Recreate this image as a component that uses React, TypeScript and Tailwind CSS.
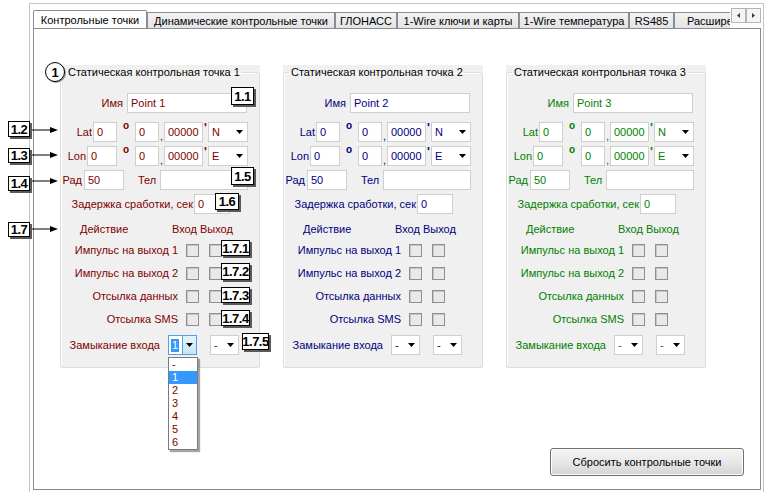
import type { ReactNode } from "react";

type Tone = "red" | "blue" | "green";

const toneText: Record<Tone, string> = {
  red: "text-[#800000]",
  blue: "text-[#000080]",
  green: "text-[#008000]",
};

const tabs = [
  { label: "Контрольные точки", w: "w-[114px]", active: true },
  { label: "Динамические контрольные точки", w: "w-[188px]" },
  { label: "ГЛОНАСС", w: "w-[62px]" },
  { label: "1-Wire ключи и карты", w: "w-[122px]" },
  { label: "1-Wire температура", w: "w-[110px]" },
  { label: "RS485", w: "w-[45px]" },
  { label: "Расширения", w: "w-[90px]" },
];

function DownArrow() {
  return (
    <svg width="7" height="4" viewBox="0 0 7 4" className="shrink-0">
      <path d="M0 0h7L3.5 4z" fill="#000" />
    </svg>
  );
}

function Field({ value = "", w }: { value?: string; w: string }) {
  return (
    <div
      className={`h-[20px] ${w} shrink-0 border border-[#cfcfcf] bg-white pl-[3px] flex items-center leading-none overflow-hidden`}
    >
      {value}
    </div>
  );
}

function Combo({ value, w, focused }: { value: string; w: string; focused?: boolean }) {
  if (focused) {
    return (
      <div
        className={`h-[20px] ${w} shrink-0 border border-[#569de5] bg-white flex items-stretch`}
      >
        <div className="flex-1 flex items-center pl-[2px]">
          <span className="bg-[#3399ff] text-white leading-[13px] px-[1px]">{value}</span>
        </div>
        <div className="w-[14px] border-l border-[#569de5] bg-linear-to-b from-[#e5f4fc] to-[#c4e5f6] flex items-center justify-center">
          <DownArrow />
        </div>
      </div>
    );
  }
  return (
    <div
      className={`h-[20px] ${w} shrink-0 border border-[#cfcfcf] bg-white pl-[3px] pr-[4px] flex items-center leading-none`}
    >
      <span className="flex-1">{value}</span>
      <DownArrow />
    </div>
  );
}

function Check() {
  return (
    <div className="w-[13px] h-[13px] shrink-0 border border-[#8f8f8f] bg-[#e9e9e9] shadow-[inset_1px_1px_0_#c6c6c6]" />
  );
}

function CoordRow({ label, labelW, firstW, gap, dir }: { label: string; labelW: string; firstW: string; gap: string; dir: string }) {
  return (
    <div className="h-[20px] flex items-start mt-[4px] first:mt-0">
      <span className={`${labelW} shrink-0 text-right self-center leading-[14px] whitespace-nowrap`}>{label}</span>
      <div className={gap}>
        <Field value="0" w={firstW} />
      </div>
      <span className="w-[18px] shrink-0 pl-[6px] font-bold text-[10px] leading-[10px] -mt-[1px]">o</span>
      <Field value="0" w="w-[24px]" />
      <span className="w-[5px] shrink-0 self-end leading-[12px] pl-[1px]">,</span>
      <Field value="00000" w="w-[39px]" />
      <span className="w-[5px] shrink-0 font-bold text-[12px] leading-[12px] pl-[1px]">'</span>
      <Combo value={dir} w="w-[40px]" />
    </div>
  );
}

function PointGroup({ n, tone }: { n: number; tone: Tone }) {
  const t = toneText[tone];
  const actions = ["Импульс на выход 1", "Импульс на выход 2", "Отсылка данных", "Отсылка SMS"];
  return (
    <div className="w-[200px] h-[303px] bg-[#f0f0f0] shrink-0">
      <fieldset className="h-full border border-[#d5dfe5] rounded-[3px] shadow-[inset_1px_1px_0_#fff]">
        <legend className="ml-[5px] px-[2px] text-black leading-[14px] whitespace-nowrap">
          Статическая контрольная точка {n}
        </legend>
        <div className={`flex flex-col ${t}`}>
          <div className="h-[20px] mt-[14px] flex items-center">
            <span className="w-[62px] text-right">Имя</span>
            <div className="ml-[4px]">
              <Field value={`Point ${n}`} w="w-[120px]" />
            </div>
          </div>
          <div className="mt-[9px] flex flex-col">
            <CoordRow label="Lat" labelW="w-[31px]" firstW="w-[24px]" gap="ml-[1px]" dir="N" />
            <CoordRow label="Lon" labelW="w-[25px]" firstW="w-[30px]" gap="ml-[1px]" dir="E" />
          </div>
          <div className="h-[20px] mt-[4px] flex items-center">
            <span className="w-[21px] text-right">Рад</span>
            <div className="ml-[2px]">
              <Field value="50" w="w-[40px]" />
            </div>
            <span className="ml-[14px] w-[20px]">Тел</span>
            <div className="ml-[2px]">
              <Field w="w-[88px]" />
            </div>
          </div>
          <div className="h-[20px] mt-[4px] flex items-center">
            <span className="w-[132px] text-right whitespace-nowrap">Задержка сработки, сек</span>
            <div className="ml-[1px]">
              <Field value="0" w="w-[36px]" />
            </div>
          </div>
          <div className="h-[14px] mt-[8px] flex items-center leading-[14px]">
            <span className="ml-[19px] w-[92px]">Действие</span>
            <span className="whitespace-nowrap">Вход Выход</span>
          </div>
          <div className="mt-[3px] flex flex-col">
            {actions.map((a) => (
              <div key={a} className="h-[23px] flex items-center">
                <span className="w-[117px] text-right whitespace-nowrap">{a}</span>
                <div className="ml-[8px]">
                  <Check />
                </div>
                <div className="ml-[10px]">
                  <Check />
                </div>
              </div>
            ))}
          </div>
          <div className="h-[20px] mt-[4px] flex items-center">
            <span className="w-[99px] text-right whitespace-nowrap">Замыкание входа</span>
            <div className="ml-[8px]">
              <Combo value={n === 1 ? "1" : "-"} w="w-[29px]" focused={n === 1} />
            </div>
            <div className="ml-[13px]">
              <Combo value="-" w="w-[29px]" />
            </div>
          </div>
        </div>
      </fieldset>
    </div>
  );
}

function Callout({ pos, children }: { pos: string; children: ReactNode }) {
  return (
    <div
      className={`absolute ${pos} z-20 bg-white border border-black shadow-[2px_2px_0_#5a5a5a] text-black font-bold text-[13px] tracking-[-0.5px] leading-none flex items-center justify-center`}
    >
      {children}
    </div>
  );
}

function Pointer({ pos }: { pos: string }) {
  return (
    <svg className={`absolute ${pos} z-20`} width="26" height="8" viewBox="0 0 26 8">
      <line x1="0" y1="4" x2="19" y2="4" stroke="#000" strokeWidth="1" />
      <path d="M18 1L26 4L18 7z" fill="#000" />
    </svg>
  );
}

export default function App() {
  const list = ["-", "1", "2", "3", "4", "5", "6"];
  return (
    <div className="relative w-[766px] h-[492px] overflow-hidden bg-white text-[11px] text-black font-['Liberation_Sans',Arial,sans-serif] pl-[29px] pt-[3px]">
      <div className="w-[735px] h-[489px] border-l border-t border-r border-[#c4c4c4] pl-[3px] pt-[6px]">
        <div className="w-[728px]">
          {/* tab strip */}
          <div className="relative h-[18px] flex items-end">
            <div className="flex items-end w-[697px] h-full overflow-hidden">
              {tabs.map((tab) =>
                tab.active ? (
                  <div
                    key={tab.label}
                    className={`${tab.w} shrink-0 h-[19px] -mb-[1px] relative z-10 bg-white border border-b-0 border-[#898c95] rounded-t-[2px] flex items-center justify-center whitespace-nowrap`}
                  >
                    {tab.label}
                  </div>
                ) : (
                  <div
                    key={tab.label}
                    className={`${tab.w} shrink-0 h-[16px] border border-b-0 border-[#898c95] bg-linear-to-b from-[#f3f3f3] to-[#e4e4e4] flex items-center justify-center whitespace-nowrap overflow-hidden pt-[1px]`}
                  >
                    {tab.label}
                  </div>
                )
              )}
            </div>
            <div className="absolute right-[0px] -top-[2px] flex">
              <div className="w-[15px] h-[15px] border border-[#b5b5b5] bg-[#f4f4f4] flex items-center justify-center">
                <svg width="3" height="5" viewBox="0 0 3 5">
                  <path d="M3 0v5L0 2.5z" fill="#2a3b6b" />
                </svg>
              </div>
              <div className="w-[15px] h-[15px] border border-[#b5b5b5] bg-[#f4f4f4] flex items-center justify-center">
                <svg width="3" height="5" viewBox="0 0 3 5">
                  <path d="M0 0v5L3 2.5z" fill="#2a3b6b" />
                </svg>
              </div>
            </div>
          </div>
          {/* panel */}
          <div className="h-[462px] border border-[#898c95] bg-white flex flex-col">
            <div className="pt-[36px] pl-[26px] flex gap-[23px]">
              <PointGroup n={1} tone="red" />
              <PointGroup n={2} tone="blue" />
              <PointGroup n={3} tone="green" />
            </div>
            <div className="mt-auto self-end mr-[16px] mb-[13px] w-[194px] h-[28px] rounded-[3px] border border-[#707070] bg-linear-to-b from-[#f4f4f4] via-[#e8e8e8] to-[#d4d4d4] shadow-[inset_0_0_0_1px_#fcfcfc] flex items-center justify-center">
              Сбросить контрольные точки
            </div>
          </div>
        </div>
      </div>

      {/* annotations */}
      <div className="absolute left-[45px] top-[62px] z-20 w-[20px] h-[20px] rounded-full border-[1.5px] border-black bg-white shadow-[1px_1px_0_#9a9a9a] font-bold text-[13px] flex items-center justify-center leading-none">
        1
      </div>
      <Callout pos="left-[231px] top-[87px] w-[23px] h-[18px]">1.1</Callout>
      <Callout pos="left-[8px] top-[121px] w-[22px] h-[16px]">1.2</Callout>
      <Callout pos="left-[8px] top-[148px] w-[22px] h-[15px]">1.3</Callout>
      <Callout pos="left-[8px] top-[176px] w-[22px] h-[15px]">1.4</Callout>
      <Callout pos="left-[231px] top-[167px] w-[23px] h-[18px]">1.5</Callout>
      <Callout pos="left-[215px] top-[193px] w-[24px] h-[17px]">1.6</Callout>
      <Callout pos="left-[8px] top-[222px] w-[22px] h-[15px]">1.7</Callout>
      <Callout pos="left-[221px] top-[240px] w-[29px] h-[16px]">1.7.1</Callout>
      <Callout pos="left-[221px] top-[263px] w-[29px] h-[17px]">1.7.2</Callout>
      <Callout pos="left-[221px] top-[287px] w-[29px] h-[16px]">1.7.3</Callout>
      <Callout pos="left-[221px] top-[310px] w-[29px] h-[16px]">1.7.4</Callout>
      <Callout pos="left-[242px] top-[333px] w-[27px] h-[17px]">1.7.5</Callout>
      <Pointer pos="left-[32px] top-[126px]" />
      <Pointer pos="left-[32px] top-[151px]" />
      <Pointer pos="left-[32px] top-[177px]" />
      <Pointer pos="left-[32px] top-[225px]" />

      {/* open dropdown of "Замыкание входа" */}
      <div className="absolute left-[168px] top-[357px] z-30 w-[30px] border border-[#7a7a7a] bg-white shadow-[2px_2px_1px_rgba(0,0,0,0.35)] text-[#800000]">
        {list.map((item) => (
          <div
            key={item}
            className={`h-[13px] leading-[13px] pl-[3px] ${item === "1" ? "bg-[#3399ff] text-white" : ""}`}
          >
            {item}
          </div>
        ))}
      </div>
    </div>
  );
}
